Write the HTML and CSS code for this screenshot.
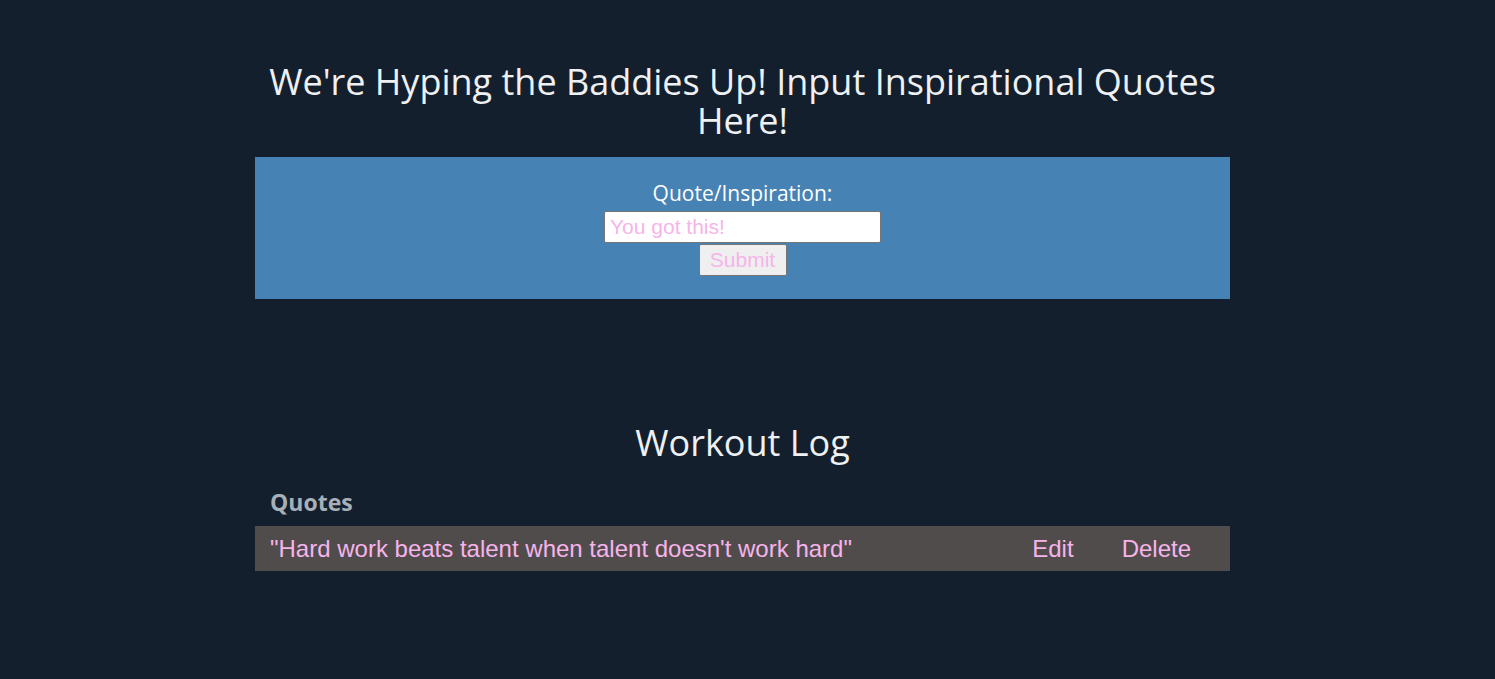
FILE: index.html
```html
<!DOCTYPE html>
<html>
<head>
<meta charset="utf-8">
<link rel="stylesheet" href="styles.css">
</head>
<body>
<main class="page">
  <h1 class="title">We're Hyping the Baddies Up! Input Inspirational Quotes Here!</h1>
  <form class="quote-form">
    <label class="form-label" for="quote">Quote/Inspiration:</label>
    <input class="form-input" id="quote" type="text" value="You got this!">
    <button class="form-button" type="button">Submit</button>
  </form>
  <h2 class="log-title">Workout Log</h2>
  <div class="table-head">Quotes</div>
  <div class="quote-row">
    <span class="quote-text">"Hard work beats talent when talent doesn't work hard"</span>
    <span class="quote-action edit">Edit</span>
    <span class="quote-action delete">Delete</span>
  </div>
</main>
</body>
</html>
```
FILE: styles.css
```css
html, body {
  margin: 0;
  padding: 0;
  background: #141f2e;
  height: 100%;
}
body {
  font-family: "Open Sans", sans-serif;
  color: #eef0f2;
}
.page {
  width: 975px;
  margin: 0 auto;
  position: relative;
  left: -5px;
  padding-top: 62px;
}
.title {
  margin: 0;
  font-size: 36px;
  font-weight: 400;
  line-height: 39px;
  text-align: center;
  color: #eef0f2;
}
.quote-form {
  margin-top: 17px;
  background: #4682b4;
  height: 142px;
  box-sizing: border-box;
  padding-top: 22px;
  display: flex;
  flex-direction: column;
  align-items: center;
}
.form-label {
  font-size: 21px;
  line-height: 29px;
  color: #ffffff;
  margin-bottom: 3px;
}
.form-input {
  width: 277px;
  height: 32px;
  box-sizing: border-box;
  font-family: "Liberation Sans", Arial, sans-serif;
  font-size: 21px;
  color: #f7b4ea;
  border: 1px solid #767676;
  border-radius: 2px;
  padding: 0 5px;
  background: #fff;
}
.form-button {
  margin-top: 1px;
  width: 88px;
  height: 32px;
  box-sizing: border-box;
  font-family: "Liberation Sans", Arial, sans-serif;
  font-size: 21px;
  color: #f7b4ea;
  background: #efefef;
  border: 1px solid #767676;
  border-radius: 2px;
  padding: 0;
}
.log-title {
  margin: 119px 0 0;
  font-size: 36px;
  font-weight: 400;
  line-height: 50px;
  text-align: center;
  color: #eef0f2;
}
.table-head {
  margin-top: 18px;
  padding-left: 15px;
  font-size: 23px;
  font-weight: 700;
  line-height: 32px;
  color: #a7b0b8;
}
.quote-row {
  margin-top: 8px;
  background: #504c4c;
  height: 45px;
  display: flex;
  align-items: center;
  padding: 0 39px 0 15px;
  font-family: "Liberation Sans", Arial, sans-serif;
  font-size: 24px;
  color: #f7b4ea;
}
.quote-text {
  flex: 1;
}
.quote-action.edit {
  margin-right: 48px;
}
```
